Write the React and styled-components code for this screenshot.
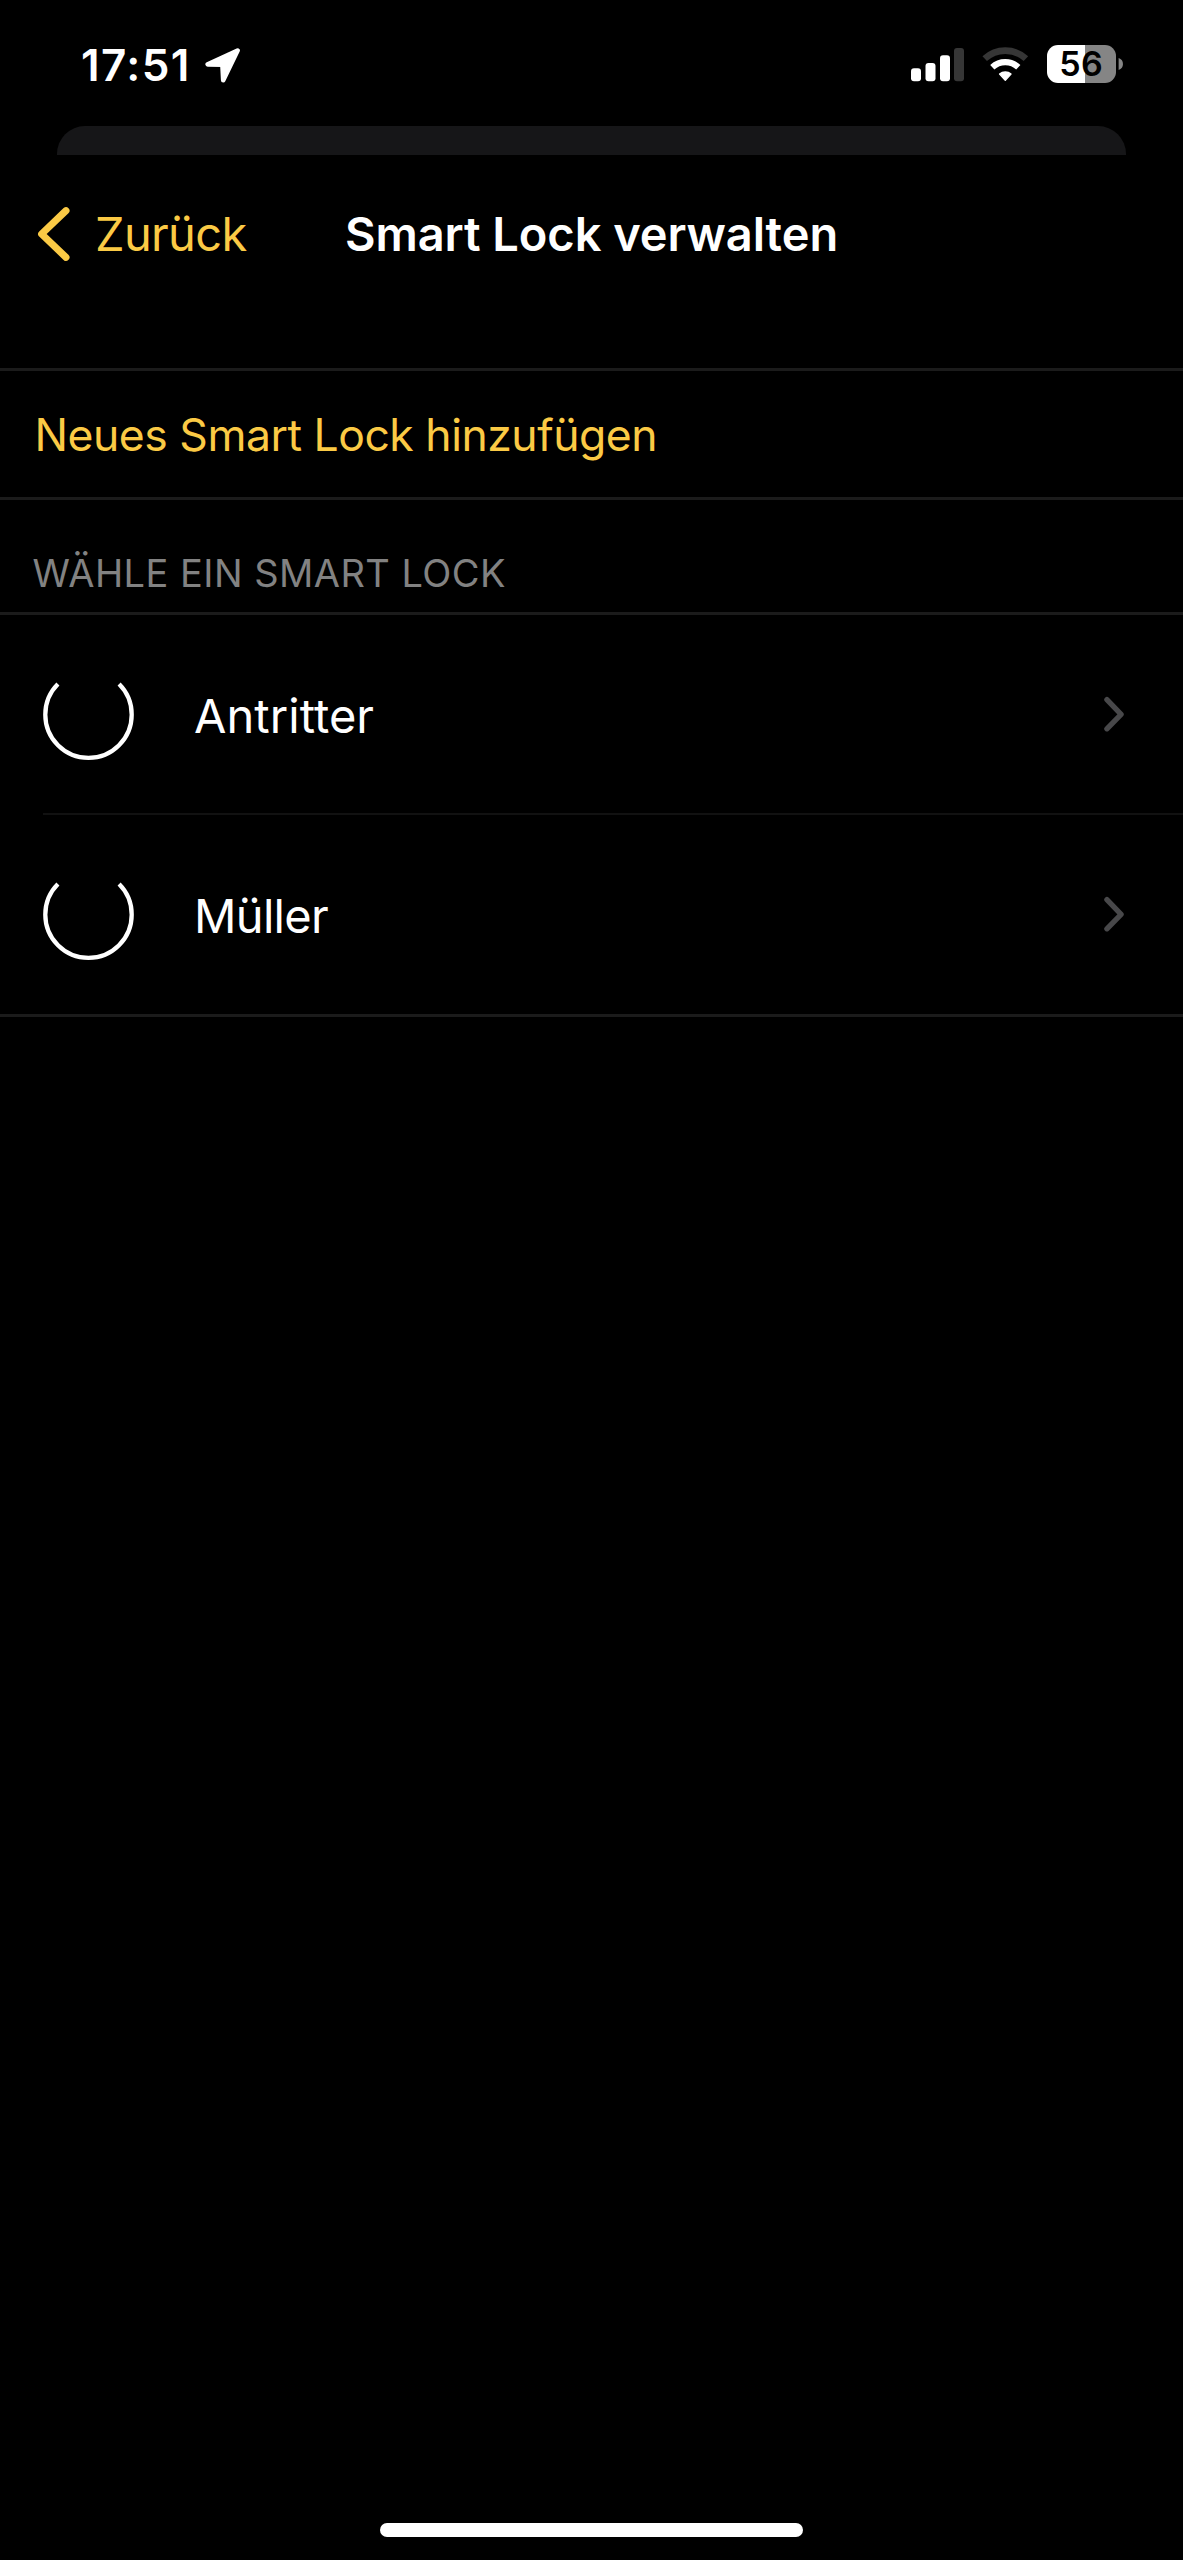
import React from "react";
import styled, { createGlobalStyle } from "styled-components";

const GlobalStyle = createGlobalStyle`
  *, *::before, *::after { box-sizing: border-box; }
  body {
    margin: 0;
    background: #000;
    color: #fff;
    font-family: Inter, "Liberation Sans", sans-serif;
    font-variant-ligatures: none;
  }
`;

const Screen = styled.div`
  display: flex;
  flex-direction: column;
  width: 1183px;
  height: 2560px;
  background: #000;
  overflow: hidden;
`;

const StatusBar = styled.header`
  display: flex;
  justify-content: space-between;
  align-items: center;
  flex: none;
  height: 126px;
  padding: 2px 60.4px 0 81px;
`;

const StatusLeft = styled.div`
  display: flex;
  align-items: center;
  gap: 17px;
  padding-top: 2px;
`;

const Time = styled.time`
  width: 107px;
  font-size: 44px;
  font-weight: 600;
  line-height: 54px;
  letter-spacing: 1.4px;
  white-space: nowrap;
`;

const StatusRight = styled.div`
  display: flex;
  align-items: center;
  gap: 18px;
`;

const Icon = styled.svg`
  display: block;
  flex: none;
`;

const Battery = styled.div`
  display: flex;
  align-items: center;
  gap: 2px;
`;

const BatteryBody = styled.div`
  display: flex;
  align-items: center;
  justify-content: center;
  width: 69px;
  height: 38px;
  border-radius: 11px;
  background: linear-gradient(to right, #fff 0 55.5%, #858585 55.5%);
  color: #000;
  font-size: 34px;
  font-weight: 600;
  line-height: 38px;
  letter-spacing: 0.2px;
`;

const BackgroundSheet = styled.div`
  flex: none;
  height: 28.5px;
  margin: 0 57px;
  border-radius: 28px 28px 0 0;
  background: #161618;
`;

const NavBar = styled.nav`
  display: grid;
  grid-template-columns: 1fr auto 1fr;
  align-items: center;
  flex: none;
  height: 159.5px;
  padding: 0 37px;
  margin-bottom: 54px;
`;

const BackButton = styled.button`
  display: flex;
  align-items: center;
  gap: 24px;
  padding: 0;
  border: 0;
  background: none;
  color: #fbca45;
  font: inherit;
  font-size: 47px;
  line-height: 60px;
  letter-spacing: -0.65px;
`;

const Title = styled.h1`
  margin: 0;
  font-size: 47px;
  font-weight: 600;
  line-height: 60px;
  letter-spacing: -0.07px;
  white-space: nowrap;
`;

const Group = styled.section`
  flex: none;
  border-top: 3px solid #1b1b1b;
  border-bottom: 3px solid #1b1b1b;
`;

const AddButton = styled.button`
  display: flex;
  align-items: center;
  width: 100%;
  height: 126px;
  padding: 1px 0 0 34.5px;
  border: 0;
  background: none;
  color: #fbca45;
  font: inherit;
  font-size: 44.5px;
  letter-spacing: -0.48px;
`;

const SectionHeading = styled.h2`
  display: flex;
  align-items: flex-end;
  flex: none;
  height: 112px;
  margin: 0;
  padding: 0 0 15px 32.5px;
  color: #828282;
  font-size: 38px;
  font-weight: 400;
  line-height: 48px;
  letter-spacing: 0.45px;
`;

const LockList = styled(Group)`
  padding-bottom: 1px;
`;

const LockRow = styled.div`
  display: flex;
  align-items: center;
  height: 198px;
  padding: 0 59px 0 43px;
`;

const LockName = styled.span`
  flex: 1;
  margin-left: 60px;
  padding-top: 3px;
  font-size: 47px;
  line-height: 60px;
  letter-spacing: ${(p) => p.$tracking}px;
`;

const RowDivider = styled.div`
  height: 2px;
  margin-left: 43px;
  background: #111;
`;

const HomeIndicator = styled.div`
  flex: none;
  width: 423px;
  height: 14px;
  margin: auto auto 23px 380px;
  border-radius: 7px;
  background: #fff;
`;

const LocationArrow = () => (
  <Icon width="36" height="36" viewBox="0 0 36 36">
    <path
      d="M32.6 3.5 2.7 17.4 17.4 17.7 18.2 33.2Z"
      fill="#fff"
      stroke="#fff"
      strokeWidth="4.6"
      strokeLinejoin="round"
    />
  </Icon>
);

const Signal = () => (
  <Icon width="53" height="38" viewBox="0 0 53 38">
    <rect x="0" y="23.3" width="10" height="13" rx="3" fill="#fff" />
    <rect x="14.5" y="18" width="10" height="18.3" rx="3" fill="#fff" />
    <rect x="29" y="10.3" width="10" height="26" rx="3" fill="#fff" />
    <rect x="43" y="3" width="10" height="33.3" rx="3" fill="#363636" />
  </Icon>
);

const Wifi = () => (
  <Icon width="47" height="38" viewBox="0 0 47 38" fill="none">
    <path d="M2.7 13.7A30.2 30.2 0 0 1 43.9 13.7" stroke="#363636" strokeWidth="6.6" />
    <path d="M10.3 22.2A19.2 19.2 0 0 1 36.3 22.2" stroke="#fff" strokeWidth="6.2" />
    <path
      d="M23.3 35.3 17.6 29.1A8.6 8.6 0 0 1 29 29.1Z"
      fill="#fff"
      stroke="#fff"
      strokeWidth="1.4"
      strokeLinejoin="round"
    />
  </Icon>
);

const BatteryNub = () => (
  <Icon width="5" height="12" viewBox="0 0 5 12">
    <path d="M0.6 0A6.3 6.3 0 0 1 0.6 12Z" fill="#858585" />
  </Icon>
);

const BackChevron = () => (
  <Icon width="34" height="56" viewBox="0 0 34 56">
    <path
      d="M29 4.6 4.6 28 29 51.4"
      fill="none"
      stroke="#fbca45"
      strokeWidth="7"
      strokeLinecap="round"
      strokeLinejoin="round"
    />
  </Icon>
);

const Spinner = () => (
  <Icon width="91" height="91" viewBox="0 0 91 91">
    <path
      d="M14.9 15.1A43.2 43.2 0 1 0 76.1 15.1"
      fill="none"
      stroke="#fff"
      strokeWidth="4.3"
    />
  </Icon>
);

const DisclosureChevron = () => (
  <Icon width="20" height="36" viewBox="0 0 20 36">
    <path
      d="M2.9 3.6 17.1 18.3 2.9 32.8"
      fill="none"
      stroke="#48484a"
      strokeWidth="5.3"
      strokeLinecap="round"
      strokeLinejoin="round"
    />
  </Icon>
);

const locks = [
  { name: "Antritter", tracking: 0.05 },
  { name: "Müller", tracking: -0.68 },
];

export default function App() {
  return (
    <>
      <GlobalStyle />
      <Screen>
        <StatusBar>
          <StatusLeft>
            <Time>17:51</Time>
            <LocationArrow />
          </StatusLeft>
          <StatusRight>
            <Signal />
            <Wifi />
            <Battery>
              <BatteryBody>56</BatteryBody>
              <BatteryNub />
            </Battery>
          </StatusRight>
        </StatusBar>
        <BackgroundSheet />
        <NavBar>
          <BackButton>
            <BackChevron />
            Zurück
          </BackButton>
          <Title>Smart Lock verwalten</Title>
        </NavBar>
        <Group>
          <AddButton>Neues Smart Lock hinzufügen</AddButton>
        </Group>
        <SectionHeading>WÄHLE EIN SMART LOCK</SectionHeading>
        <LockList>
          {locks.map((lock, i) => (
            <React.Fragment key={lock.name}>
              {i > 0 && <RowDivider />}
              <LockRow>
                <Spinner />
                <LockName $tracking={lock.tracking}>{lock.name}</LockName>
                <DisclosureChevron />
              </LockRow>
            </React.Fragment>
          ))}
        </LockList>
        <HomeIndicator />
      </Screen>
    </>
  );
}
